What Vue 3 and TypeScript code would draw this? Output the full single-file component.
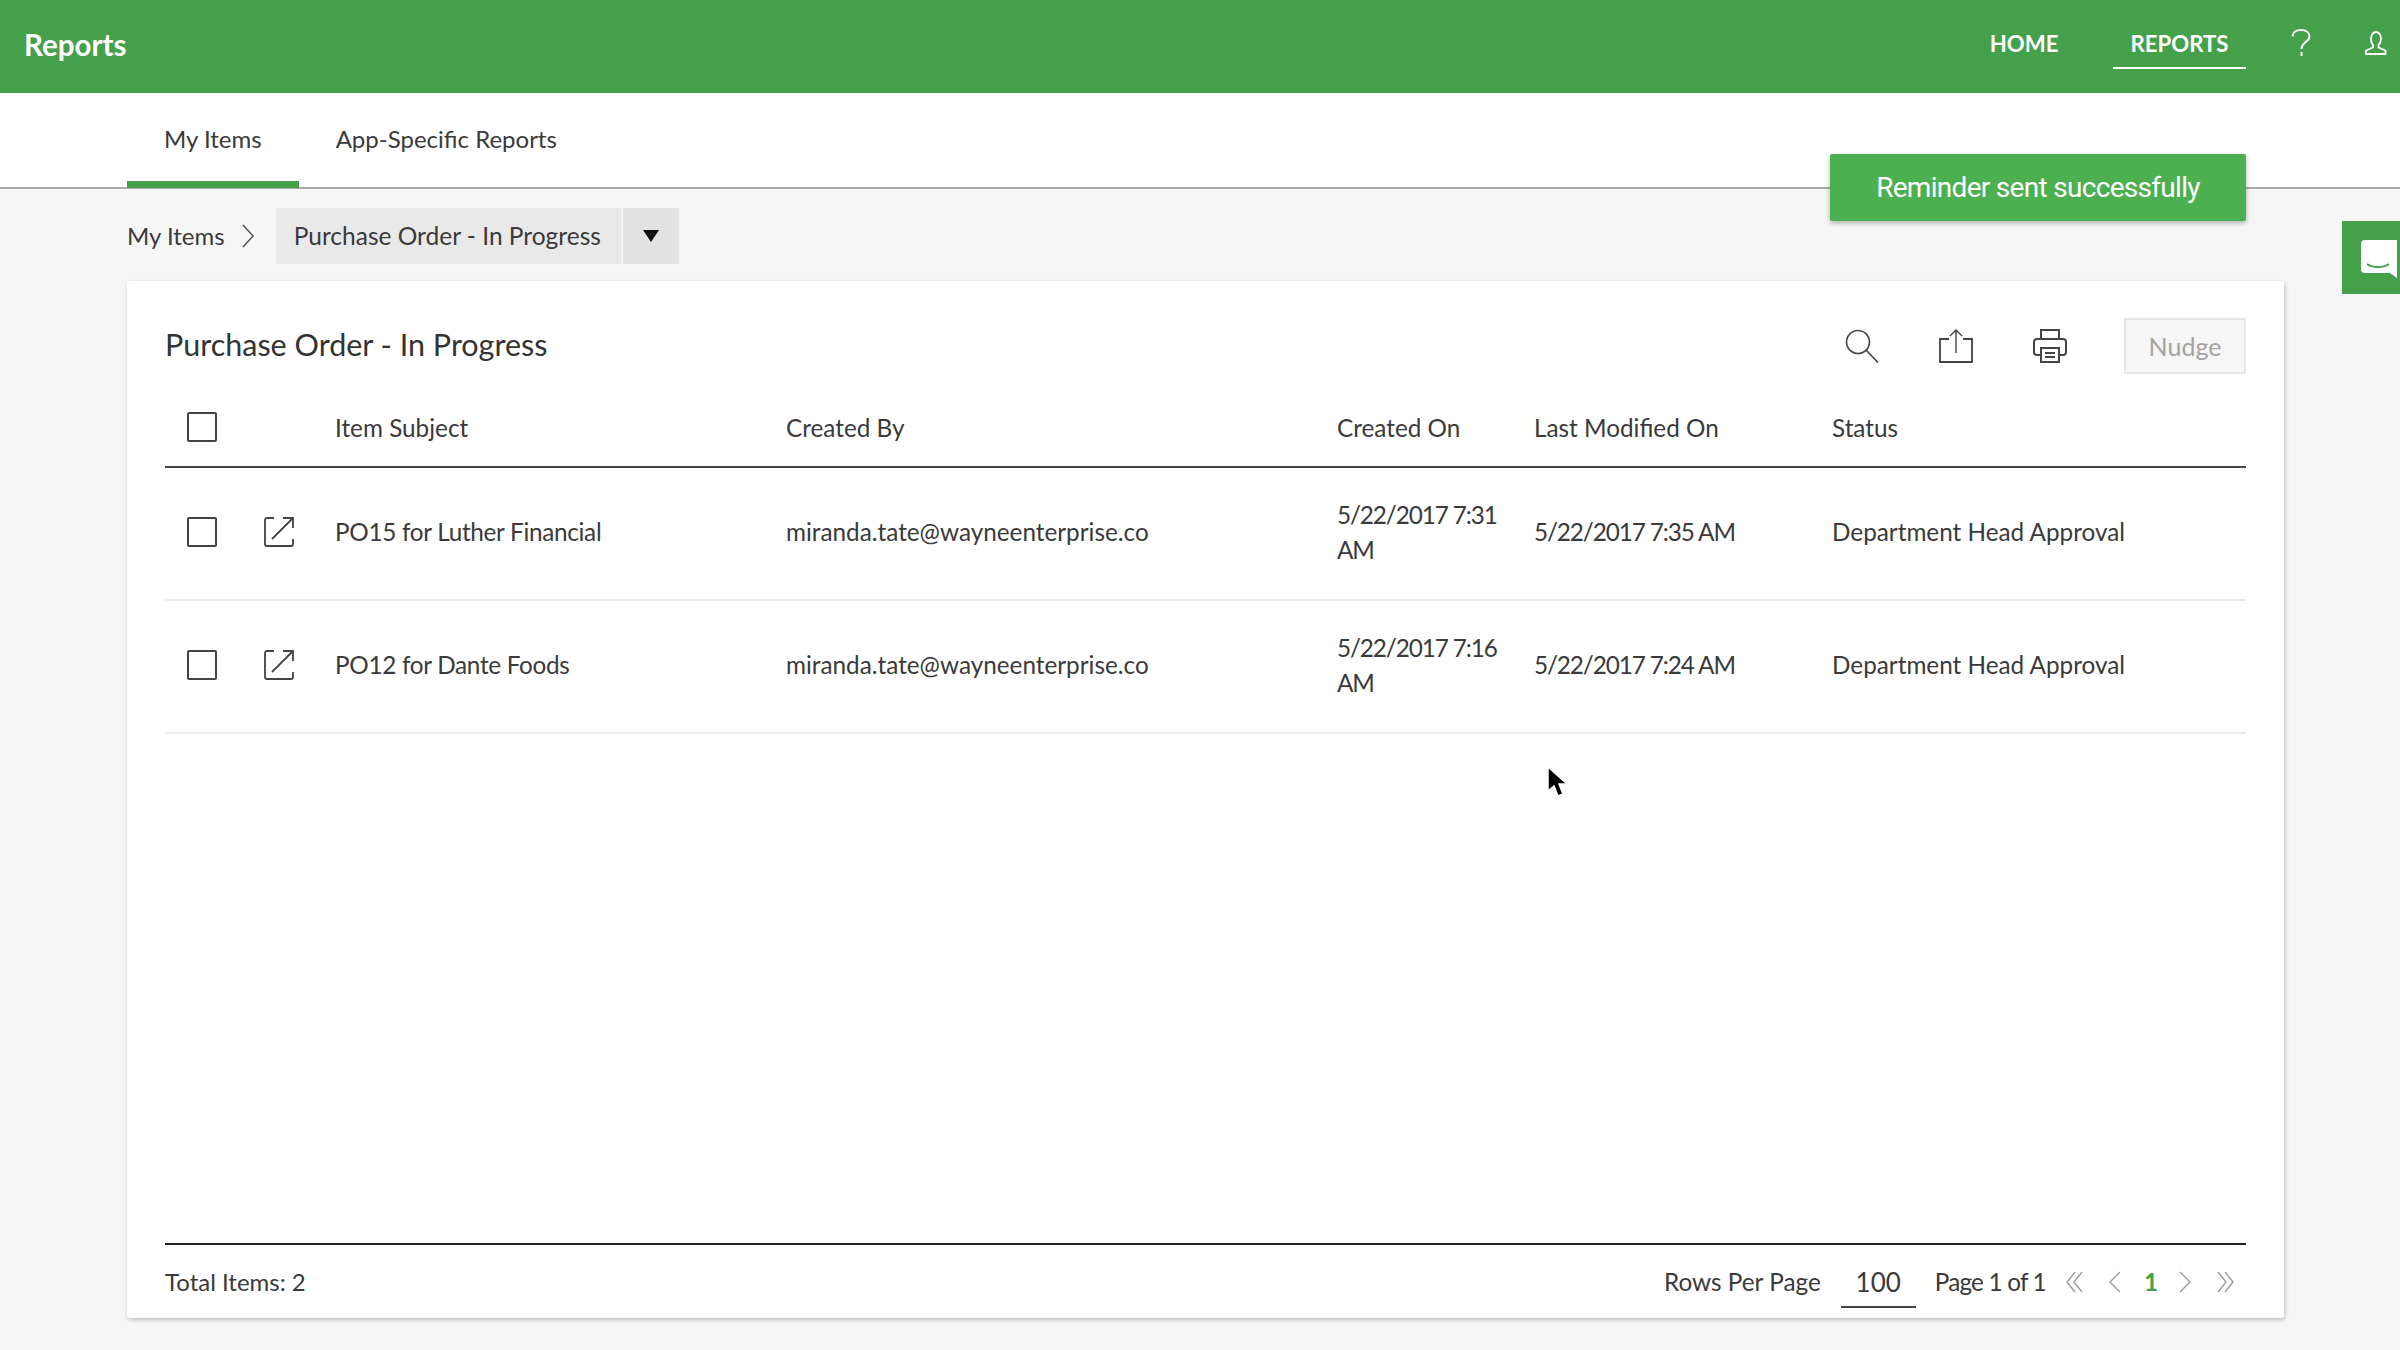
<script setup lang="ts">
interface ReportRow {
  subject: string
  createdBy: string
  createdOn: string
  modifiedOn: string
  status: string
}

const columns = ['Item Subject', 'Created By', 'Created On', 'Last Modified On', 'Status']

const rows: ReportRow[] = [
  {
    subject: 'PO15 for Luther Financial',
    createdBy: 'miranda.tate@wayneenterprise.co',
    createdOn: '5/22/2017 7:31 AM',
    modifiedOn: '5/22/2017 7:35 AM',
    status: 'Department Head Approval'
  },
  {
    subject: 'PO12 for Dante Foods',
    createdBy: 'miranda.tate@wayneenterprise.co',
    createdOn: '5/22/2017 7:16 AM',
    modifiedOn: '5/22/2017 7:24 AM',
    status: 'Department Head Approval'
  }
]
</script>

<template>
  <div class="page">
    <header class="topbar">
      <div class="brand">Reports</div>
      <nav class="nav">
        <a class="nav-link">HOME</a>
        <a class="nav-link active">REPORTS</a>
        <svg class="help" width="20" height="28" viewBox="0 0 20 28" fill="none" stroke="#fff" stroke-width="2">
          <path d="M1.5 7.5C1.5 3.5 5 1 10 1s8.500 2.500 8.500 6.500c0 5-8 6-8 12.500" />
          <path d="M10.500 23v4" />
        </svg>
        <svg class="user" width="24" height="24" viewBox="0 0 24 24" fill="none" stroke="#fff" stroke-width="1.800">
          <path d="M7 8c0-4 2-7 5-7s5 3 5 7c0 3-1.500 5-2.500 6v2.500l7 3V23H2v-3.500l7-3V14C8 13 7 11 7 8z" />
        </svg>
      </nav>
    </header>

    <div class="tabs">
      <a class="tab active">My Items</a>
      <a class="tab">App-Specific Reports</a>
    </div>

    <div class="crumbs">
      <span class="crumb-root">My Items</span>
      <svg class="crumb-sep" width="13" height="24" viewBox="0 0 13 24" fill="none" stroke="#555" stroke-width="1.500">
        <path d="M1 1l10 11L1 23" />
      </svg>
      <div class="crumb-current">Purchase Order - In Progress</div>
      <div class="crumb-arrow"><span class="triangle"></span></div>
    </div>

    <section class="card">
      <div class="card-head">
        <h1 class="card-title">Purchase Order - In Progress</h1>
        <div class="actions">
          <svg width="34" height="34" viewBox="0 0 34 34" fill="none" stroke="#444" stroke-width="1.600">
            <circle cx="13" cy="13" r="11.500" />
            <path d="M21 21l12 12.500" />
          </svg>
          <svg width="34" height="34" viewBox="0 0 34 34" fill="none" stroke="#444" stroke-width="1.800">
            <path d="M10 10H1v23h32V10h-9" />
            <path d="M17 24V1M11 7l6-6 6 6" stroke-width="1.400" />
          </svg>
          <svg width="34" height="34" viewBox="0 0 34 34" fill="none" stroke="#444" stroke-width="2">
            <path d="M8 10V1h18v9" />
            <path d="M8 26H4a3 3 0 0 1-3-3V13a3 3 0 0 1 3-3h26a3 3 0 0 1 3 3v10a3 3 0 0 1-3 3h-4" />
            <path d="M8 19h18v14H8z" />
            <path d="M12 24h10M12 28h10" />
          </svg>
          <button class="nudge" type="button">Nudge</button>
        </div>
      </div>

      <div class="grid-row head-row">
        <div class="select-cell"><span class="checkbox"></span></div>
        <div v-for="col in columns" :key="col">{{ col }}</div>
      </div>

      <div v-for="row in rows" :key="row.subject" class="grid-row body-row">
        <div class="select-cell">
          <span class="checkbox"></span>
          <svg width="30" height="30" viewBox="0 0 30 30" fill="none" stroke="#444" stroke-width="1.800">
            <path d="M10 1H3a2 2 0 0 0-2 2v24a2 2 0 0 0 2 2h24a2 2 0 0 0 2-2v-5" />
            <path d="M8 22L29 1M19 1h10v10" />
          </svg>
        </div>
        <div class="subject">{{ row.subject }}</div>
        <div>{{ row.createdBy }}</div>
        <div class="wrap date">{{ row.createdOn }}</div>
        <div class="date">{{ row.modifiedOn }}</div>
        <div>{{ row.status }}</div>
      </div>

      <div class="spacer"></div>

      <footer class="card-foot">
        <span class="total">Total Items: 2</span>
        <div class="pager">
          <span>Rows Per Page</span>
          <span class="per-page">100</span>
          <span class="page-of">Page 1 of 1</span>
          <svg class="pg first" width="17" height="22" viewBox="0 0 17 22" fill="none" stroke="#999" stroke-width="1.300">
            <path d="M9 1L1 11l8 10M16 1L8 11l8 10" />
          </svg>
          <svg class="pg prev" width="12" height="22" viewBox="0 0 12 22" fill="none" stroke="#999" stroke-width="1.300">
            <path d="M11 1L1 11l10 10" />
          </svg>
          <span class="pg-num">1</span>
          <svg class="pg next" width="12" height="22" viewBox="0 0 12 22" fill="none" stroke="#999" stroke-width="1.300">
            <path d="M1 1l10 10L1 21" />
          </svg>
          <svg class="pg last" width="17" height="22" viewBox="0 0 17 22" fill="none" stroke="#999" stroke-width="1.300">
            <path d="M1 1l8 10-8 10M8 1l8 10-8 10" />
          </svg>
        </div>
      </footer>
    </section>

    <div class="toast">Reminder sent successfully</div>

    <div class="chat-tab">
      <svg width="36" height="38" viewBox="0 0 36 38" fill="#fff">
        <path d="M4 0h32v38l-7-5H4a4 4 0 0 1-4-4V4a4 4 0 0 1 4-4z" />
        <path d="M6 24c6 4 16 4 22 0" fill="none" stroke="#44a04b" stroke-width="2" />
      </svg>
    </div>

    <svg class="cursor" width="22" height="32" viewBox="0 0 22 32">
      <path d="M1 1v24l6-5 4 10 5-2-4-10h8z" fill="#000" stroke="#fff" stroke-width="1.500" />
    </svg>
  </div>
</template>

<style>
html,
body {
  margin: 0;
  background: #f6f6f6;
}
</style>

<style scoped>
.page {
  position: relative;
  width: 2400px;
  height: 1350px;
  overflow: hidden;
  background: #f6f6f6;
  color: #3a3a3a;
  font-family: Lato, "Open Sans", "Liberation Sans", sans-serif;
  font-size: 24px;
}

.topbar {
  height: 93px;
  background: #44a04b;
  color: #fff;
  display: flex;
  align-items: center;
  justify-content: space-between;
  padding: 0 12px 0 24px;
  box-sizing: border-box;
}

.brand {
  font-size: 29.500px;
  font-weight: 700;
  margin-bottom: 5px;
}

.nav {
  display: flex;
  align-items: center;
}

.nav-link {
  font-size: 22.200px;
  font-weight: 700;
  line-height: 46px;
  margin-bottom: 3px;
  padding: 0 17.500px;
  border-bottom: 2px solid transparent;
}

.nav-link.active {
  margin-left: 37px;
  border-bottom-color: #fff;
}

.help {
  margin-left: 45px;
  margin-top: -8px;
}

.user {
  margin-left: 53px;
  margin-top: -8px;
}

.tabs {
  height: 96px;
  padding-left: 127px;
  box-sizing: border-box;
  display: flex;
  background: #fff;
  border-bottom: 2px solid #aaa;
}

.tab {
  padding: 0 37px;
  line-height: 92px;
  height: 95px;
  box-sizing: border-box;
}

.tab.active {
  border-bottom: 7px solid #44a04b;
}

.crumbs {
  margin: 19px 0 17px 127px;
  height: 56px;
  display: flex;
  align-items: center;
}

.crumb-root {
  margin-top: -2px;
}

.crumb-sep {
  margin: 0 21px 0 17px;
}

.crumb-current {
  height: 56px;
  line-height: 56px;
  padding: 0 20px 0 18px;
  font-size: 24.500px;
  background: #e9e9e9;
}

.crumb-arrow {
  width: 56px;
  height: 56px;
  margin-left: 2px;
  background: #e2e2e2;
  display: flex;
  align-items: center;
  justify-content: center;
}

.triangle {
  border-left: 8px solid transparent;
  border-right: 8px solid transparent;
  border-top: 12px solid #111;
}

.card {
  margin: 0 116px 0 127px;
  height: 1037px;
  box-sizing: border-box;
  padding: 0 38px;
  font-size: 24.300px;
  background: #fff;
  border-radius: 3px;
  box-shadow: 1px 2px 4px rgba(0, 0, 0, 0.22);
  display: flex;
  flex-direction: column;
}

.card-head {
  height: 94px;
  padding-top: 38px;
  box-sizing: border-box;
  display: flex;
  justify-content: space-between;
  align-items: flex-start;
}

.card-title {
  margin: 7px 0 0;
  font-size: 30.500px;
  font-weight: 400;
  line-height: 36px;
  color: #333;
}

.actions {
  display: flex;
  align-items: center;
  margin-top: -1px;
}

.actions svg {
  margin-right: 60px;
  flex: none;
}

.nudge {
  width: 122px;
  height: 56px;
  padding: 0;
  margin-left: -3px;
  font: inherit;
  font-size: 25px;
  color: #a3a3a3;
  background: #f6f6f6;
  border: 2px solid #e6e6e6;
}

.grid-row {
  display: grid;
  grid-template-columns: 170px 451px 551px 197px 298px 1fr;
  align-items: center;
}

.head-row {
  height: 93px;
  padding-top: 13px;
  border-bottom: 2px solid #444;
  box-sizing: border-box;
}

.body-row {
  height: 133px;
  padding-bottom: 4px;
  box-sizing: border-box;
  border-bottom: 2px solid #ececec;
}

.select-cell {
  display: flex;
  align-items: center;
  gap: 47px;
  padding-left: 22px;
}

.checkbox {
  display: block;
  width: 30px;
  height: 30px;
  box-sizing: border-box;
  border: 2px solid #444;
  border-radius: 2px;
}

.subject {
  letter-spacing: -0.300px;
}

.date {
  letter-spacing: -1.100px;
}

.wrap {
  width: 170px;
  line-height: 35px;
}

.spacer {
  flex: 1;
}

.card-foot {
  height: 75px;
  border-top: 2px solid #222;
  box-sizing: border-box;
  display: flex;
  align-items: center;
  justify-content: space-between;
}

.total {
  font-size: 24px;
}

.pager {
  display: flex;
  align-items: center;
  padding-right: 12px;
}

.per-page {
  width: 75px;
  margin-left: 20px;
  line-height: 48px;
  padding-top: 2px;
  text-align: center;
  font-size: 26px;
  border-bottom: 2px solid #444;
}

.page-of {
  margin-left: 19px;
  letter-spacing: -0.800px;
}

.first {
  margin-left: 20px;
}

.prev {
  margin-left: 26px;
}

.pg-num {
  margin-left: 23px;
  color: #44a04b;
  font-weight: 700;
}

.next {
  margin-left: 21px;
}

.last {
  margin-left: 26px;
}

.toast {
  position: absolute;
  left: 1830px;
  top: 154px;
  width: 416px;
  height: 67px;
  line-height: 67px;
  text-align: center;
  font-family: Roboto, Lato, sans-serif;
  font-size: 28px;
  letter-spacing: -0.700px;
  color: #fff;
  background: #4caf50;
  border-radius: 2px;
  box-shadow: 0 2px 5px rgba(0, 0, 0, 0.3);
}

.chat-tab {
  position: absolute;
  left: 2342px;
  top: 221px;
  width: 58px;
  height: 73px;
  background: #44a04b;
  box-sizing: border-box;
  padding: 19px 0 0 19px;
  overflow: hidden;
}

.cursor {
  position: absolute;
  left: 1547px;
  top: 766px;
}
</style>
